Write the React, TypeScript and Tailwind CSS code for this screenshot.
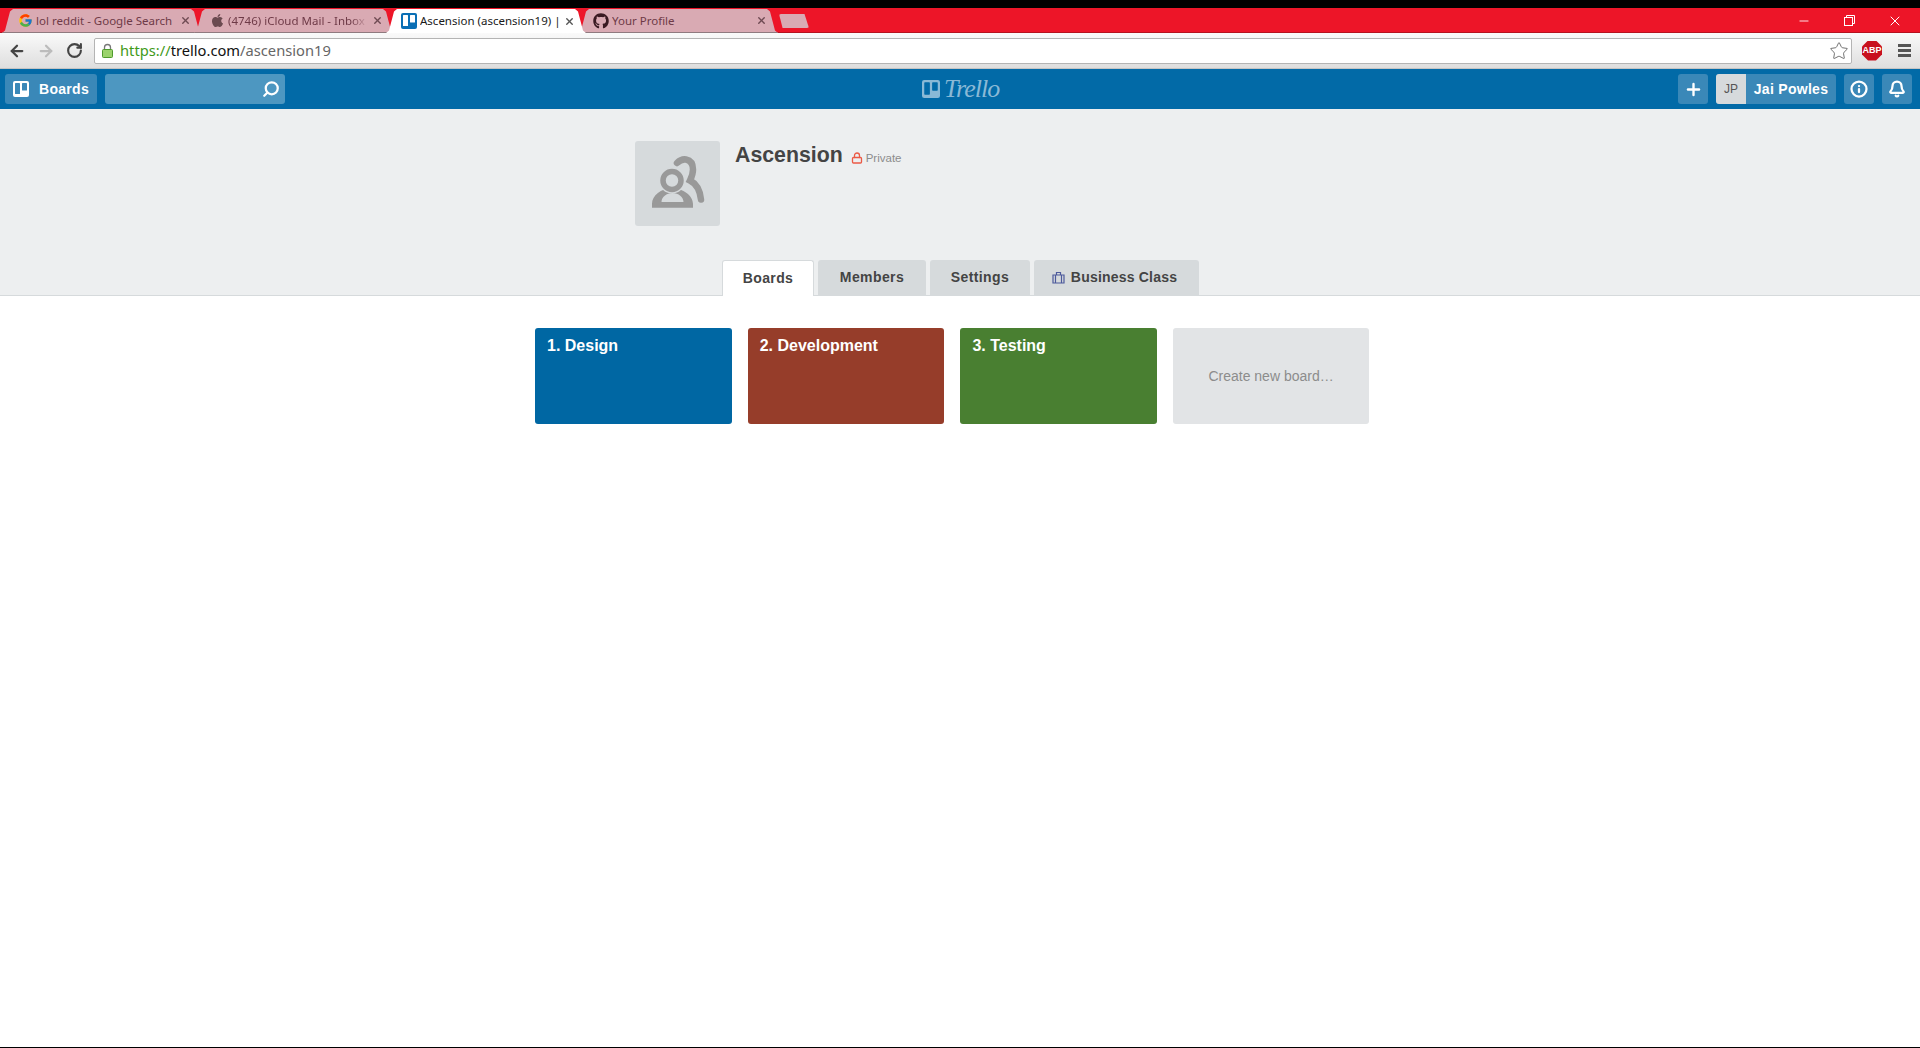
import { ArrowLeft, ArrowRight, RotateCw, Star, Plus, Bell, Info, Search, Lock, X, Minus } from "lucide-react";
import { FaGithub, FaApple } from "react-icons/fa";
import { FcGoogle } from "react-icons/fc";

const ui = "font-['Noto_Sans','Open_Sans',sans-serif]";
const arial = "font-['Liberation_Sans',Arial,sans-serif]";

function TrelloMark({ className, bar = "#ffffff", bg = "#026aa7" }: { className: string; bar?: string; bg?: string }) {
  return (
    <svg viewBox="0 0 16 16" className={className}>
      <rect width="16" height="16" rx="2" fill={bar} />
      <rect x="2" y="2" width="5" height="11" rx="0.6" fill={bg} />
      <rect x="9" y="2" width="5" height="7.5" rx="0.6" fill={bg} />
    </svg>
  );
}

function Tab({ icon, title, active, fade }: { icon: React.ReactNode; title: string; active?: boolean; fade?: boolean }) {
  return (
    <div
      className={`w-[200px] h-[24px] -mr-[8px] flex items-center pl-[15px] pr-[11px] [clip-path:polygon(0_100%,3px_90%,8px_10%,11px_0,calc(100%-11px)_0,calc(100%-8px)_10%,calc(100%-3px)_90%,100%_100%)] ${
        active ? "bg-white text-[#1a1a1a] relative z-10" : "bg-[#d9aab3] text-[#6e3a47] border-b border-[#8f7a7f]"
      }`}
    >
      <span className="w-[16px] h-[16px] shrink-0 flex items-center justify-center">{icon}</span>
      <span
        className={`ml-[3px] flex-1 overflow-hidden whitespace-nowrap text-[11.5px] leading-[16px] ${ui} ${
          fade ? "[mask-image:linear-gradient(to_right,black_88%,transparent)]" : ""
        }`}
      >
        {title}
      </span>
      <X className={`w-[11px] h-[11px] ml-[4px] shrink-0 ${active ? "text-[#555]" : "text-[#6e4a52]"}`} strokeWidth={3} />
    </div>
  );
}

function HeadBtn({ children, className = "" }: { children: React.ReactNode; className?: string }) {
  return <div className={`h-[30px] rounded-[3px] bg-[#3a88b8] flex items-center justify-center text-white ${className}`}>{children}</div>;
}

function Board({ title, color }: { title: string; color: string }) {
  return (
    <div className={`w-[196.7px] h-[96px] rounded-[3px] px-[12px] pt-[8px] ${color}`}>
      <span className={`text-[16px] leading-[20px] font-bold text-white ${arial} block`}>{title}</span>
    </div>
  );
}

function ProfTab({ label, active, width, icon, tracking = "tracking-[0.4px]", extra = "" }: { label: string; active?: boolean; width: string; icon?: React.ReactNode; tracking?: string; extra?: string }) {
  return (
    <div
      className={`${width} rounded-t-[3px] flex items-center justify-center gap-[6px] text-[14px] font-bold ${tracking} text-[#444] ${arial} ${extra} ${
        active ? "bg-white border border-b-0 border-[#d6dadc] relative z-10 h-[36px] -mb-px" : "bg-[#d6dadc] h-[35px]"
      }`}
    >
      {icon}
      {label}
    </div>
  );
}

export default function App() {
  return (
    <div className="w-[1920px] h-[1048px] overflow-hidden bg-white flex flex-col">
      <div className="h-[8px] bg-black shrink-0" />
      {/* tab strip */}
      <div className="h-[25px] shrink-0 bg-[#ed1528] shadow-[inset_0_-1px_0_#b5121f] flex items-end pl-[2px]">
        <div className="flex items-end">
          <Tab title="lol reddit - Google Search" icon={<FcGoogle className="w-[15px] h-[15px]" />} />
          <Tab fade title="(4746) iCloud Mail - Inbox" icon={<FaApple className="w-[15px] h-[15px] text-[#6b4a50]" />} />
          <Tab active title="Ascension (ascension19) |" icon={<TrelloMark className="w-[16px] h-[16px]" bar="#0a6fb5" bg="#ffffff" />} />
          <Tab title="Your Profile" icon={<FaGithub className="w-[16px] h-[16px] text-[#3a1a22]" />} />
        </div>
        <div className="w-[30px] h-[14px] ml-[9px] mb-[5px] rounded-[2px] bg-[#d9aab3] [clip-path:polygon(0_0,85%_0,100%_100%,12%_100%)]" />
        <div className="ml-auto pr-[2px] h-full flex items-center text-white">
          <div className="w-[45px] flex justify-center"><Minus className="w-[14px] h-[14px]" strokeWidth={1.5} /></div>
          <div className="w-[46px] flex justify-center">
            <svg viewBox="0 0 11 11" className="w-[11px] h-[11px]" fill="none" stroke="currentColor"><rect x="0.5" y="2.5" width="8" height="8" /><path d="M2.5 2.5v-2h8v8h-2" /></svg>
          </div>
          <div className="w-[46px] flex justify-center"><X className="w-[16px] h-[16px]" strokeWidth={1.5} /></div>
        </div>
      </div>
      {/* toolbar */}
      <div className="h-[36px] shrink-0 bg-gradient-to-b from-[#fafafa] to-[#dedede] border-b border-[#c4c4c4] flex items-center pl-[8px] pr-[8px]">
        <ArrowLeft className="w-[18px] h-[18px] text-[#444]" strokeWidth={3} />
        <ArrowRight className="w-[18px] h-[18px] ml-[11px] text-[#bcbcbc]" strokeWidth={3} />
        <RotateCw className="w-[17px] h-[17px] ml-[11px] text-[#444]" strokeWidth={3} />
        <div className="ml-[11px] h-[26px] w-[1758px] bg-white border border-[#b4b4b4] rounded-[2px] flex items-center pl-[7px] pr-[2px]">
          <svg viewBox="0 0 11 15" className="w-[11px] h-[15px]">
            <path d="M2.500 7V4.500a3 3 0 0 1 6 0V7" fill="none" stroke="#777" strokeWidth="1.300" />
            <rect x="0.500" y="6.500" width="10" height="8" rx="1" fill="#9bd36c" stroke="#4f9a2d" />
          </svg>
          <span className={`ml-[7px] text-[14.7px] leading-none ${ui}`}>
            <span className="text-[#3f9a1a]">https://</span>
            <span className="text-[#111]">trello.com</span>
            <span className="text-[#666]">/ascension19</span>
          </span>
          <Star className="ml-auto w-[20px] h-[20px] text-[#666]" strokeWidth={1.1} />
        </div>
        <div className="ml-[10px] w-[20px] h-[20px] bg-[#c8101e] flex items-center justify-center [clip-path:polygon(30%_0,70%_0,100%_30%,100%_70%,70%_100%,30%_100%,0_70%,0_30%)]">
          <span className={`text-[9px] font-bold text-white leading-none ${arial}`}>ABP</span>
        </div>
        <div className="ml-[16px] w-[13px] flex flex-col gap-[2px]">
          <div className="h-[3px] bg-[#555]" />
          <div className="h-[3px] bg-[#555]" />
          <div className="h-[3px] bg-[#555]" />
        </div>
      </div>
      {/* Trello header */}
      <div className="h-[40px] shrink-0 bg-[#026aa7] flex items-center pl-[5px] pr-[8px] relative">
        <HeadBtn className="w-[92px] gap-[10px] bg-[#3a88b8]">
          <TrelloMark className="w-[16px] h-[16px]" bar="#ffffff" bg="#3a88b8" />
          <span className={`text-[14px] font-bold tracking-[0.3px] ${arial}`}>Boards</span>
        </HeadBtn>
        <div className="ml-[8px] w-[180px] h-[30px] rounded-[3px] bg-[#4d97c1] flex items-center justify-end pr-[5px]">
          <Search className="w-[18px] h-[18px] text-white -scale-x-100" strokeWidth={3} />
        </div>
        <div className="absolute left-[922px] top-[6px] flex items-center gap-[4px]">
          <TrelloMark className="w-[18px] h-[18px]" bar="#8ab9d6" bg="#026aa7" />
          <span className="text-[26px] leading-[28px] italic tracking-[-1px] text-[#8ab9d6] font-['Liberation_Serif',serif]">Trello</span>
        </div>
        <HeadBtn className="ml-auto w-[30px]"><Plus className="w-[19px] h-[19px]" strokeWidth={3} /></HeadBtn>
        <HeadBtn className="ml-[8px] w-[120px] overflow-hidden">
          <span className={`w-[30px] h-full bg-[#d6dadc] text-[#555] text-[12px] flex items-center justify-center ${arial}`}>JP</span>
          <span className={`flex-1 text-center text-[14px] font-bold tracking-[0.3px] ${arial}`}>Jai Powles</span>
        </HeadBtn>
        <HeadBtn className="ml-[8px] w-[30px]"><Info className="w-[18px] h-[18px]" strokeWidth={3} /></HeadBtn>
        <HeadBtn className="ml-[8px] w-[30px]"><Bell className="w-[18px] h-[18px]" strokeWidth={3} /></HeadBtn>
      </div>
      {/* profile section */}
      <div className="h-[187px] shrink-0 bg-[#edeff0] border-b border-[#d6dadc] flex flex-col">
        <div className="h-[151px] flex pl-[635px] pt-[32px]">
          <div className="w-[85px] h-[85px] rounded-[3px] bg-[#d6dadc] shrink-0">
            <svg viewBox="0 0 85 85" className="w-[85px] h-[85px]" fill="none">
              <path d="M42 22c3-3 6-4 9-3.500 5 1 7 5 7 10 0 4-1 7-3 11 6 3 10 10 11 19" stroke="#999999" strokeWidth="6.500" strokeLinecap="round" />
              <path fillRule="evenodd" fill="#999999" d="M17 66.700v-4c0-8 9-15.500 20-15.500s21 7.500 21 15.500v4zM26.500 61h22c0-5-5-9-11-9s-11 4-11 9z" />
              <circle cx="37" cy="39.500" r="11.500" fill="#d6dadc" stroke="#d6dadc" strokeWidth="3" />
              <circle cx="37" cy="39.500" r="9" stroke="#999999" strokeWidth="5.500" />
            </svg>
          </div>
          <div className="ml-[15px] flex items-start">
            <span className={`text-[21.3px] leading-[26px] mt-[1px] font-bold text-[#444] ${arial}`}>Ascension</span>
            <Lock className="ml-[8px] mt-[11px] w-[12px] h-[12px] text-[#eb5a46]" strokeWidth={2.6} />
            <span className={`ml-[3px] mt-[9px] text-[11.5px] leading-[16px] text-[#8c8c8c] ${arial}`}>Private</span>
          </div>
        </div>
        <div className="flex items-end pl-[722px] gap-[4px] h-[35px]">
          <ProfTab active width="w-[92px]" label="Boards" />
          <ProfTab width="w-[108px]" label="Members" />
          <ProfTab width="w-[100px]" label="Settings" />
          <ProfTab
            width="w-[165px]"
            tracking="tracking-[0.2px]"
            extra="pr-[4px]"
            label="Business Class"
            icon={
              <svg viewBox="0 0 13 13" className="w-[13px] h-[13px]" fill="none" stroke="#4d5a9c" strokeWidth="1.200">
                <path d="M1 4h11v8H1zM3.500 4v8M9.500 4v8M4.500 4V1.500h4V4" />
              </svg>
            }
          />
        </div>
      </div>
      {/* boards */}
      <div className="flex-1 pl-[535px] pt-[32px] border-b border-black">
        <div className="flex gap-[16px]">
          <Board title="1. Design" color="bg-[#0067a3]" />
          <Board title="2. Development" color="bg-[#963d2a]" />
          <Board title="3. Testing" color="bg-[#497f31]" />
          <div className={`w-[196px] h-[96px] rounded-[3px] bg-[#e2e4e6] flex items-center justify-center text-[14px] text-[#8c8c8c] ${arial}`}>
            Create new board…
          </div>
        </div>
      </div>
    </div>
  );
}
